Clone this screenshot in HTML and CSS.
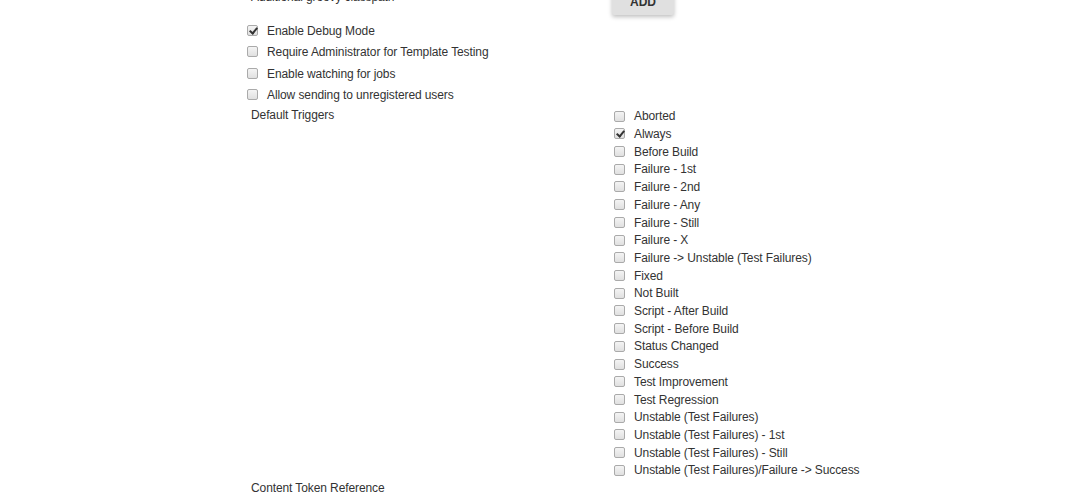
FILE: index.html
```html
<!DOCTYPE html>
<html lang="en">
  <head>
    <meta charset="UTF-8" />
    <meta name="viewport" content="width=device-width, initial-scale=1.0" />
    <title>Extended E-mail Notification</title>
    <link rel="stylesheet" href="styles.css">
  </head>

  <body>
    <main class="form">
      <div class="top">
        <div class="label">Additional groovy classpath</div>
        <div class="setting">
          <button class="add">ADD</button>
        </div>
      </div>

      <div class="options">
        <label class="check"><input type="checkbox" checked /> <span>Enable Debug Mode</span></label>
        <label class="check"><input type="checkbox" /> <span>Require Administrator for Template Testing</span></label>
        <label class="check"><input type="checkbox" /> <span>Enable watching for jobs</span></label>
        <label class="check"><input type="checkbox" /> <span>Allow sending to unregistered users</span></label>
      </div>

      <div class="triggers">
        <div class="label">Default Triggers</div>
        <div class="setting" id="liste"></div>
      </div>

      <div class="label token">Content Token Reference</div>
    </main>

    <template>
      <label class="check small"><input type="checkbox" /> <span class="navn"></span></label>
    </template>

    <script>
      const triggers = [
        "Aborted",
        "Always",
        "Before Build",
        "Failure - 1st",
        "Failure - 2nd",
        "Failure - Any",
        "Failure - Still",
        "Failure - X",
        "Failure -> Unstable (Test Failures)",
        "Fixed",
        "Not Built",
        "Script - After Build",
        "Script - Before Build",
        "Status Changed",
        "Success",
        "Test Improvement",
        "Test Regression",
        "Unstable (Test Failures)",
        "Unstable (Test Failures) - 1st",
        "Unstable (Test Failures) - Still",
        "Unstable (Test Failures)/Failure -> Success",
      ];

      const liste = document.querySelector("#liste");
      const skabelon = document.querySelector("template").content;
      triggers.forEach((navn) => {
        const klon = skabelon.cloneNode(true);
        klon.querySelector(".navn").textContent = navn;
        if (navn == "Always") klon.querySelector("input").checked = true;
        liste.appendChild(klon);
      });
    </script>
  </body>
</html>
```

FILE: styles.css
```css
body {
  margin: 0;
  font-family: "Liberation Sans", Arial, sans-serif;
  font-size: 12px;
  letter-spacing: -0.1px;
  color: #333;
  background: white;
  overflow: hidden;
}

.form {
  padding-left: 247px;
}

.top {
  display: flex;
  margin-top: -21px;
  height: 36px;
}

.top .label {
  width: 361px;
  padding-top: 10px;
  line-height: 16px;
}

.label {
  padding-left: 4px;
}

.add {
  width: 62px;
  height: 36px;
  border: none;
  border-radius: 2px;
  background: #e0e0e0;
  box-shadow: 0 2px 4px rgba(0, 0, 0, 0.25);
  font-family: "Liberation Sans", Arial, sans-serif;
  font-size: 12px;
  font-weight: bold;
  color: #333;
  padding: 0;
  padding-top: 10px;
}

.options {
  margin-top: 6px;
}

.check {
  display: flex;
  align-items: center;
  line-height: 21.33px;
}

.check.small {
  line-height: 17.7px;
}

.check input {
  appearance: none;
  -webkit-appearance: none;
  width: 11px;
  height: 11px;
  margin: -2px 9px 0 0;
  border: 1px solid #aaa;
  border-radius: 2px;
  background: linear-gradient(#f4f4f4, #e0e0e0);
  position: relative;
}

.check input:checked::after {
  content: "";
  position: absolute;
  left: 3px;
  top: 0px;
  width: 3px;
  height: 6px;
  border: solid #333;
  border-width: 0 2px 2px 0;
  transform: rotate(40deg);
}

.check span {
  white-space: nowrap;
}

.triggers {
  display: flex;
  margin-top: 2px;
}

.triggers .label {
  width: 361px;
  line-height: 14px;
}

.triggers .setting {
  padding-left: 2px;
}

.token {
  line-height: 17px;
}
```
